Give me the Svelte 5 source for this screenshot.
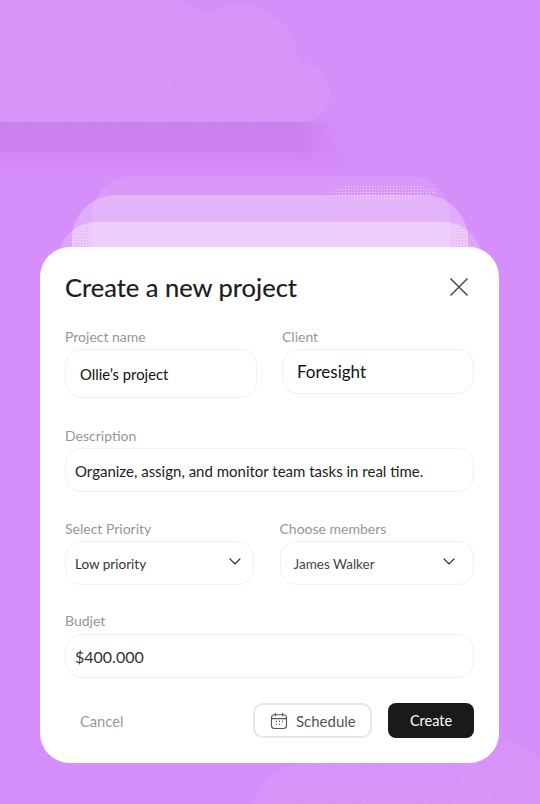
<script lang="ts">
  let projectName = $state("Ollie’s project");
  let client = $state("Foresight");
  let description = $state("Organize, assign, and monitor team tasks in real time.");
  let budget = $state("$400.000");
</script>

<div class="page">
  <svg class="backdrop" width="540" height="804" viewBox="0 0 540 804" aria-hidden="true">
    <defs>
      <filter id="grain" x="0" y="0" width="100%" height="100%" color-interpolation-filters="sRGB">
        <feTurbulence type="fractalNoise" baseFrequency="0.5" numOctaves="2" seed="4" result="n" />
        <feColorMatrix in="n" type="matrix" values="0 0 0 0 0.81  0 0 0 0 0.5  0 0 0 0 0.95  0 0 0 1.1 -0.5" result="speck" />
        <feComposite in="speck" in2="SourceAlpha" operator="in" result="clipped" />
        <feMerge>
          <feMergeNode in="SourceGraphic" />
          <feMergeNode in="clipped" />
        </feMerge>
      </filter>
      <filter id="soft" x="-30%" y="-30%" width="160%" height="160%">
        <feGaussianBlur stdDeviation="7" />
      </filter>
      <linearGradient id="bandFade" x1="0" x2="1" y1="0" y2="0">
        <stop offset="0.88" stop-color="#cc80f0" />
        <stop offset="1" stop-color="#cc80f0" stop-opacity="0" />
      </linearGradient>
      <linearGradient id="dropFade" x1="0" x2="0" y1="0" y2="1">
        <stop offset="0" stop-color="#cc80f0" stop-opacity="0.5" />
        <stop offset="1" stop-color="#cc80f0" stop-opacity="0" />
      </linearGradient>
      <pattern id="dots" width="3" height="3" patternUnits="userSpaceOnUse">
        <rect width="1" height="1" fill="#f0d6fc" />
      </pattern>
      <pattern id="darkDots" width="3" height="3" patternUnits="userSpaceOnUse">
        <rect width="1" height="1" fill="#dda4f8" />
      </pattern>
      <clipPath id="frontClip">
        <rect x="58" y="222" width="424" height="200" rx="38" />
      </clipPath>
    </defs>

    <path d="M296 118 L322 118 L346 166 L296 166 Z" fill="#cc80f0" opacity="0.3" filter="url(#soft)" />
    <rect x="0" y="152" width="312" height="22" fill="url(#dropFade)" />
    <rect x="0" y="122" width="335" height="30" fill="url(#bandFade)" />
    <path
      class="cloud"
      d="M0 0 H175 C190 3 200 8 206 14 C220 6 232 5 240 5 C272 5 297 30 299 62 C318 60 330 76 330 94 C330 110 318 122 302 122 H0 Z"
      filter="url(#grain)"
    />
    <path
      class="cloud"
      d="M253 804 C262 775 285 762 320 760 C370 758 440 752 480 742 C505 735 525 745 540 760 V804 Z"
      filter="url(#grain)"
    />

    <rect class="layer" x="92" y="176" width="358" height="200" rx="40" fill-opacity="0.1" />
    <ellipse cx="384" cy="192" rx="54" ry="8" fill="url(#dots)" />
    <rect class="layer" x="72" y="195" width="396" height="200" rx="44" fill-opacity="0.27" />
    <rect class="layer" x="58" y="222" width="424" height="200" rx="38" fill-opacity="0.2" />
    <rect class="layer" x="72" y="222" width="396" height="60" fill-opacity="0.2" clip-path="url(#frontClip)" />
    <rect x="73" y="226" width="15" height="21" fill="url(#darkDots)" />
    <rect x="452" y="226" width="15" height="21" fill="url(#darkDots)" />
  </svg>

  <section class="card">
    <header class="card-head">
      <h1>Create a new project</h1>
      <button class="close" aria-label="Close">
        <svg width="20" height="20" viewBox="0 0 20 20" fill="none" stroke="#555" stroke-width="1.7">
          <path d="M1.5 1.5 18.5 18.5M18.5 1.5 1.5 18.5" />
        </svg>
      </button>
    </header>

    <div class="row first">
      <div class="field half">
        <span class="label">Project name</span>
        <div class="input tall small-text">{projectName}</div>
      </div>
      <div class="field half">
        <span class="label">Client</span>
        <div class="input client big-text">{client}</div>
      </div>
    </div>

    <div class="field desc">
      <span class="label">Description</span>
      <div class="input wide">{description}</div>
    </div>

    <div class="row selects">
      <div class="field priority">
        <span class="label">Select Priority</span>
        <div class="input select">
          <span>Low priority</span>
          <svg width="12" height="7" viewBox="0 0 12 7" fill="none" stroke="#222" stroke-width="1.2">
            <path d="M.7.7 6 6 11.3.7" />
          </svg>
        </div>
      </div>
      <div class="field members">
        <span class="label">Choose members</span>
        <div class="input select member">
          <span>James Walker</span>
          <svg width="12" height="7" viewBox="0 0 12 7" fill="none" stroke="#222" stroke-width="1.2">
            <path d="M.7.7 6 6 11.3.7" />
          </svg>
        </div>
      </div>
    </div>

    <div class="field budget">
      <span class="label">Budjet</span>
      <div class="input wide amount">{budget}</div>
    </div>

    <footer class="actions">
      <button class="cancel">Cancel</button>
      <button class="schedule">
        <svg width="18" height="18" viewBox="0 0 18 18" fill="none" stroke="#555" stroke-width="1.1">
          <rect x="1.5" y="2.8" width="15" height="13.7" rx="3" />
          <path d="M1.5 6.6H16.5M5.4 1V4.2M12.6 1V4.2" />
          <path d="M6 9.4H7M9 9.4H10M12 9.4H13M6 12.4H7M9 12.4H10" stroke-width="1.4" />
        </svg>
        Schedule
      </button>
      <button class="create">Create</button>
    </footer>
  </section>
</div>

<style>
  :global(body) {
    margin: 0;
    background: #d68efa;
  }

  .page {
    position: relative;
    width: 540px;
    height: 804px;
    overflow: hidden;
    box-sizing: border-box;
    padding: 247px 41px 0 40px;
    font-family: Lato, "Open Sans", sans-serif;
  }

  .backdrop {
    position: absolute;
    inset: 0;
  }

  .cloud {
    fill: #d995fa;
  }

  .layer {
    fill: #fff;
  }

  .card {
    position: relative;
    height: 516px;
    box-sizing: border-box;
    background: #fff;
    border-radius: 30px;
    padding: 25px;
  }

  .card-head {
    display: flex;
    align-items: center;
    justify-content: space-between;
    height: 30px;
  }

  h1 {
    margin: 0;
    font-size: 25.5px;
    font-weight: 400;
    color: #1c1c1c;
    -webkit-text-stroke: 0.2px #1c1c1c;
  }

  .close {
    display: flex;
    padding: 0;
    margin-right: 5px;
    border: none;
    background: none;
  }

  .row {
    display: flex;
    align-items: flex-start;
    justify-content: space-between;
  }

  .row.first {
    margin-top: 26px;
  }

  .field {
    display: flex;
    flex-direction: column;
    gap: 3px;
  }

  .half {
    width: 192px;
  }

  .desc {
    margin-top: 29px;
  }

  .row.selects {
    margin-top: 28px;
  }

  .priority {
    width: 189px;
  }

  .members {
    width: 194.5px;
  }

  .budget {
    margin-top: 27px;
    gap: 4px;
  }

  .label {
    font-size: 14px;
    line-height: 18px;
    color: #969696;
  }

  .input {
    display: flex;
    align-items: center;
    box-sizing: border-box;
    height: 44px;
    padding: 0 14px;
    border: 1.5px solid #f1f1f1;
    border-radius: 16px;
    color: #1a1a1a;
  }

  .tall {
    height: 49px;
  }

  .client {
    height: 45px;
  }

  .small-text {
    padding-top: 1px;
    font-size: 14.8px;
    color: #111;
  }

  .big-text {
    padding-bottom: 1px;
    font-size: 17px;
    color: #111;
  }

  .wide {
    padding-top: 1px;
    padding-left: 9px;
    font-size: 15px;
    color: #222;
  }

  .amount {
    font-size: 16px;
    color: #333;
  }

  .select {
    justify-content: space-between;
    padding: 1px 12px 0 9px;
    font-size: 13.5px;
    color: #333;
  }

  .select svg {
    margin-top: -4px;
  }

  .member {
    padding: 1px 18px 0 13px;
    color: #444;
  }

  .actions {
    display: flex;
    align-items: center;
    margin-top: 25px;
    height: 35px;
  }

  button {
    font-family: inherit;
  }

  .cancel {
    margin-left: 15px;
    margin-right: auto;
    padding: 0;
    border: none;
    background: none;
    font-size: 14.7px;
    color: #9a9a9a;
  }

  .schedule {
    display: flex;
    align-items: center;
    gap: 8px;
    width: 119px;
    height: 35px;
    box-sizing: border-box;
    padding: 0 0 0 15px;
    border: 2px solid #e6e6e6;
    border-radius: 10px;
    background: #fff;
    font-size: 15px;
    color: #555;
  }

  .create {
    width: 86px;
    height: 35px;
    margin-left: 16px;
    padding: 0;
    border: none;
    border-radius: 8px;
    background: #1a1a1a;
    font-size: 14.5px;
    color: #fff;
  }
</style>
